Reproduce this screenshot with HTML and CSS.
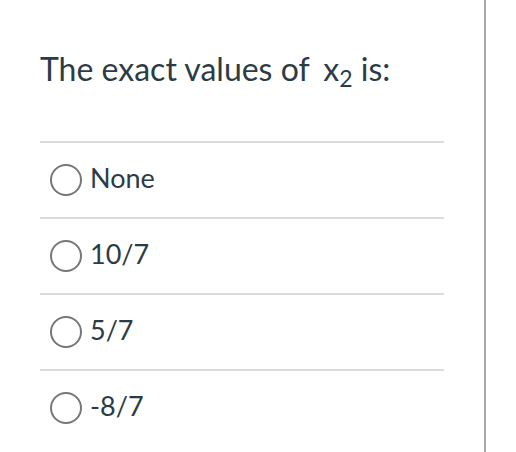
FILE: index.html
```html
<!DOCTYPE html>
<html>
<head>
<meta charset="utf-8">
<link rel="stylesheet" href="styles.css">
</head>
<body>
<div class="page">
  <div class="question">
    <h1 class="title">The exact values of <span class="math">x<sub>2</sub></span> is:</h1>
    <ul class="answers">
      <li class="answer"><span class="radio"></span><span class="label">None</span></li>
      <li class="answer"><span class="radio"></span><span class="label">10/7</span></li>
      <li class="answer"><span class="radio"></span><span class="label">5/7</span></li>
      <li class="answer"><span class="radio"></span><span class="label">-8/7</span></li>
    </ul>
  </div>
</div>
</body>
</html>
```
FILE: styles.css
```css
html, body {
  margin: 0;
  padding: 0;
  background: #fff;
}
.page {
  width: 484px;
  height: 452px;
  border-right: 2px solid #a9a9a9;
  box-sizing: content-box;
}
.question {
  width: 404px;
  padding-left: 40px;
  font-family: Lato, "Open Sans", sans-serif;
  color: #2d3b45;
}
.title {
  margin: 0;
  padding-top: 50px;
  height: 141px;
  box-sizing: border-box;
  font-size: 32px;
  font-weight: 400;
  line-height: 38px;
  white-space: nowrap;
}
.math {
  margin-left: 6px;
}
.math sub {
  font-size: 23px;
  line-height: 0;
  vertical-align: -6px;
}
.answers {
  list-style: none;
  margin: 0;
  padding: 0;
}
.answer {
  display: flex;
  align-items: center;
  height: 74px;
  border-top: 2px solid #dcdcdc;
}
.radio {
  width: 28px;
  height: 28px;
  border: 2px solid #777;
  border-radius: 50%;
  margin-left: 10px;
  margin-right: 8px;
  flex: none;
}
.label {
  font-size: 27px;
  line-height: 32px;
  padding-bottom: 5px;
}
```
